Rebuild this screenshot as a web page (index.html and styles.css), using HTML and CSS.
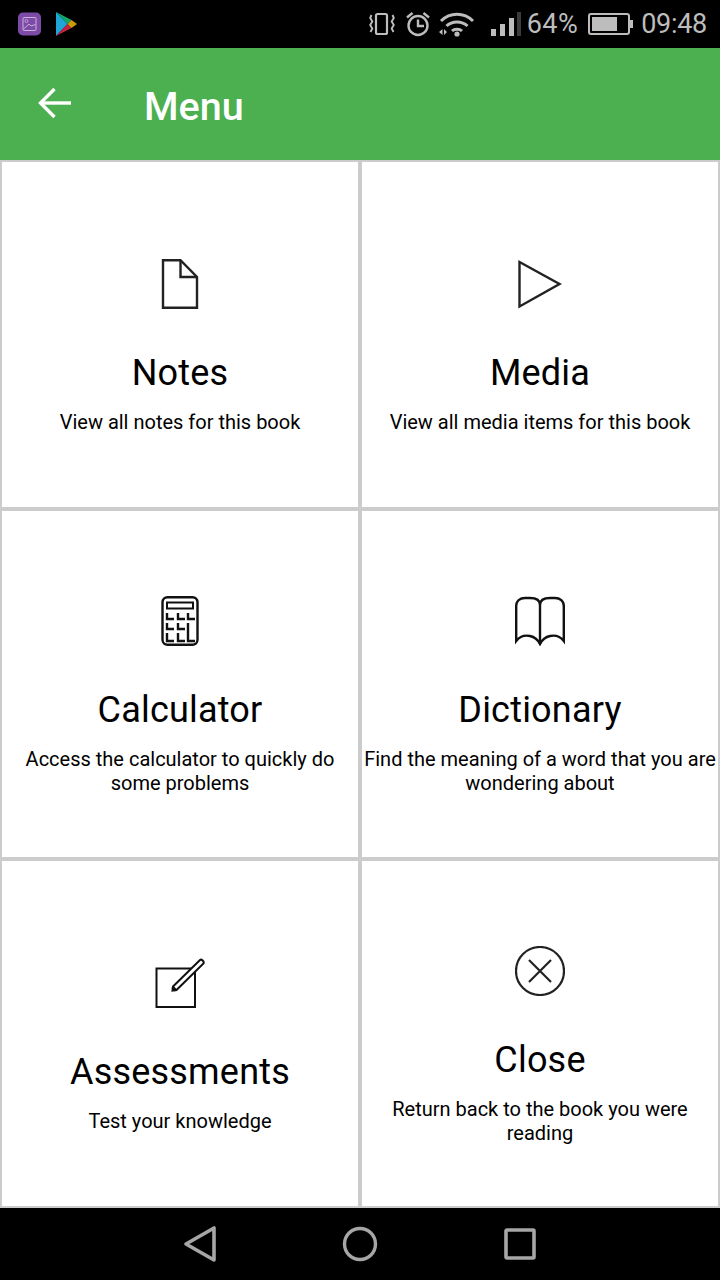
FILE: index.html
```html
<!DOCTYPE html>
<html lang="en">
<head>
    <meta charset="UTF-8">
    <title>Menu</title>
    <link rel="stylesheet" href="styles.css">
</head>
<body>
    <div class="status-bar">
        <div class="status-left">
            <svg class="app-gallery" width="23" height="24" viewBox="0 0 23 24">
                <rect x="0" y="0.5" width="23" height="23" rx="5" fill="#7e4aa8"/>
                <rect x="5" y="5.5" width="13" height="13" rx="1" fill="none" stroke="#c9b3d8" stroke-width="1"/>
                <circle cx="8.5" cy="9" r="1.5" fill="none" stroke="#c9b3d8" stroke-width="0.8"/>
                <path d="M5.5 17 L11 12 L13 14 L17.5 12.5" fill="none" stroke="#c9b3d8" stroke-width="1"/>
            </svg>
            <svg class="app-play" width="22" height="24" viewBox="0 0 22 24">
                <path d="M0 0 L0 24 L11.5 12 Z" fill="#1fa6d6"/>
                <path d="M0 0 L11.5 12 L15.5 8 Z" fill="#12a86b"/>
                <path d="M0 24 L11.5 12 L15.5 16 Z" fill="#c4233f"/>
                <path d="M15.5 8 L21 12 L15.5 16 L11.5 12 Z" fill="#d09a08"/>
            </svg>
        </div>
        <div class="status-right">
            <svg class="st-vibrate" width="26" height="24" viewBox="0 0 26 24" fill="none" stroke="#bdbdbd" stroke-width="2.2">
                <rect x="7" y="2" width="11" height="20" rx="1.5"/>
                <path d="M2.5 3 L1.2 6 L3.3 9.5 L1.2 13 L3.3 16.5 L1.5 20" stroke-width="1.9"/>
                <path d="M23.5 3 L24.8 6 L22.7 9.5 L24.8 13 L22.7 16.5 L24.5 20" stroke-width="1.9"/>
            </svg>
            <svg class="st-alarm" width="26" height="26" viewBox="0 0 26 26" fill="none" stroke="#bdbdbd" stroke-width="2.4">
                <circle cx="13" cy="14.5" r="9.5"/>
                <path d="M13 8.5 V15 H19"/>
                <path d="M2 6.5 L7.5 2 M24 6.5 L18.5 2"/>
            </svg>
            <svg class="st-wifi" width="36" height="26" viewBox="0 0 36 26" fill="none" stroke="#bdbdbd" stroke-width="3">
                <path d="M2 10 C11 1 25 1 34 10"/>
                <path d="M7.5 15 C13 9.5 23 9.5 28.5 15"/>
                <path d="M13 20 C15.5 17.5 20.5 17.5 23 20"/>
                <circle cx="18" cy="23" r="2.6" fill="#bdbdbd" stroke="none"/>
                <path d="M0 21 L3.5 18 V24 Z M5 18 L8 21 L5 24 Z" fill="#bdbdbd" stroke="none"/>
            </svg>
            <svg class="st-signal" width="30" height="25" viewBox="0 0 30 25">
                <rect x="0" y="17" width="5" height="7" fill="#bdbdbd"/>
                <rect x="9" y="12" width="5" height="12" fill="#bdbdbd"/>
                <rect x="18" y="6" width="5" height="18" fill="#bdbdbd"/>
                <rect x="26" y="0" width="4" height="24" fill="#3c3c3c"/>
            </svg>
            <span class="st-text st-pct">64%</span>
            <svg class="st-battery" width="45" height="22" viewBox="0 0 45 22">
                <rect x="1" y="1" width="40" height="20" rx="2" fill="none" stroke="#bdbdbd" stroke-width="2"/>
                <rect x="4" y="4" width="25" height="14" fill="#bdbdbd"/>
                <rect x="42" y="7" width="3" height="8" fill="#bdbdbd"/>
            </svg>
            <span class="st-text st-time">09:48</span>
        </div>
    </div>

    <div class="app-bar">
        <svg class="back-icon" width="34" height="32" viewBox="0 0 34 32" fill="none" stroke="#fff" stroke-width="3.4">
            <path d="M33 16 H3"/>
            <path d="M16.5 2 L2.5 16 L16.5 30"/>
        </svg>
        <h1 class="app-title">Menu</h1>
    </div>

    <div class="menu-grid">
        <div class="menu-item">
            <svg class="menu-icon" viewBox="0 0 50 50" fill="none" stroke="#222" stroke-width="2.4">
                <path d="M8 1.2 H25.5 L42 18 V48.8 H8 Z"/>
                <path d="M25.5 1.2 V18 H42"/>
            </svg>
            <h2>Notes</h2>
            <p>View all notes for this book</p>
        </div>
        <div class="menu-item">
            <svg class="menu-icon" viewBox="0 0 50 50" fill="none" stroke="#222" stroke-width="2.4">
                <path d="M4.5 3 V47.5 L44.5 25 Z"/>
            </svg>
            <h2>Media</h2>
            <p>View all media items for this book</p>
        </div>
        <div class="menu-item">
            <svg class="menu-icon" viewBox="0 0 50 50" fill="none" stroke="#111" stroke-width="2.4">
                <rect x="7.5" y="1.2" width="35" height="47.6" rx="5"/>
                <rect x="12" y="6.5" width="26" height="6" stroke-width="2"/>
                <path d="M12 17 V23 H19 M23 17 V23 H30 M33 17 V23 H40"/>
                <path d="M12 27 V33 H19 M23 27 V33 H30"/>
                <path d="M12 37 V45 H19 M23 37 V45 H30 M33 27 V45 H40"/>
            </svg>
            <h2>Calculator</h2>
            <p>Access the calculator to quickly do some problems</p>
        </div>
        <div class="menu-item">
            <svg class="menu-icon" viewBox="0 0 50 50" fill="none" stroke="#111" stroke-width="2.4">
                <path d="M25 9 C25 4 21 2 15 2 H10 C5 2 1.2 5 1.2 10 V45 C5 40 10 39 15 40 C20 41 23 44 25 48 C27 44 30 41 35 40 C40 39 45 40 48.8 45 V10 C48.8 5 45 2 40 2 H35 C29 2 25 4 25 9 Z"/>
                <path d="M25 9 V48"/>
            </svg>
            <h2>Dictionary</h2>
            <p>Find the meaning of a word that you are wondering about</p>
        </div>
        <div class="menu-item">
            <svg class="menu-icon" viewBox="0 0 50 50" fill="none" stroke="#111" stroke-width="2">
                <rect x="1.5" y="10.5" width="38.5" height="38.5"/>
                <path d="M18 28.5 L45 2 C46.5 0.8 49.5 3.5 48.5 5.5 L21.5 32 L17.5 32.5 Z" fill="#fff"/>
                <path d="M17.5 29 L21 32.5" stroke-width="3"/>
            </svg>
            <h2>Assessments</h2>
            <p>Test your knowledge</p>
        </div>
        <div class="menu-item">
            <svg class="menu-icon" viewBox="0 0 50 50" fill="none" stroke="#222" stroke-width="2.2">
                <circle cx="25" cy="25" r="24"/>
                <path d="M14 14 L36 36 M36 14 L14 36"/>
            </svg>
            <h2>Close</h2>
            <p>Return back to the book you were reading</p>
        </div>
    </div>

    <div class="nav-bar">
        <svg width="36" height="38" viewBox="0 0 36 38" fill="none" stroke="#a6a6a6" stroke-width="3.6" stroke-linejoin="round">
            <path d="M32 3 V35 L4 19 Z"/>
        </svg>
        <svg width="36" height="36" viewBox="0 0 36 36" fill="none" stroke="#a6a6a6" stroke-width="3.4">
            <circle cx="18" cy="18" r="15.5"/>
        </svg>
        <svg width="36" height="36" viewBox="0 0 36 36" fill="none" stroke="#a6a6a6" stroke-width="3.6" stroke-linejoin="round">
            <rect x="4" y="4" width="28" height="28" rx="1"/>
        </svg>
    </div>
</body>
</html>
```

FILE: styles.css
```css
body {
    margin: 0;
    width: 720px;
    height: 1280px;
    display: flex;
    flex-direction: column;
    font-family: Roboto, "Liberation Sans", sans-serif;
    background-color: white;
    overflow: hidden;
}
.status-bar {
    height: 48px;
    flex: none;
    background-color: black;
    display: flex;
    justify-content: space-between;
    align-items: center;
    padding: 0 13px 0 18px;
}
.status-left {
    display: flex;
    align-items: center;
    gap: 15px;
}
.status-right {
    display: flex;
    align-items: center;
}
.st-text {
    color: #bdbdbd;
    font-size: 27px;
}
.st-alarm {
    margin-left: 10px;
}
.st-wifi {
    margin-left: 8px;
}
.st-signal {
    margin-left: 16px;
}
.st-pct {
    margin-left: 6px;
    letter-spacing: 0.5px;
}
.st-battery {
    margin-left: 10px;
}
.st-time {
    margin-left: 8px;
    letter-spacing: -0.3px;
}
.app-bar {
    height: 112px;
    flex: none;
    background-color: #4caf50;
    display: flex;
    align-items: center;
    padding-left: 38px;
}
.back-icon {
    margin-top: -2px;
}
.app-title {
    margin: 5px 0 0 72px;
    color: white;
    font-size: 39.5px;
    font-weight: 500;
}
.menu-grid {
    flex: 1;
    display: grid;
    grid-template-columns: 1fr 1fr;
    grid-template-rows: 1fr 1fr 1fr;
}
.menu-item {
    box-sizing: border-box;
    border: 2px solid #cccccc;
    display: flex;
    flex-direction: column;
    align-items: center;
    justify-content: center;
    padding-top: 24px;
    text-align: center;
    color: black;
}
.menu-icon {
    width: 50px;
    height: 50px;
    flex: none;
}
.menu-item h2 {
    margin: 43px 0 16px;
    font-size: 36px;
    font-weight: 400;
    line-height: 42px;
    letter-spacing: 0.2px;
}
.menu-item p {
    margin: 0;
    font-size: 20px;
    line-height: 24px;
}
.nav-bar {
    height: 72px;
    flex: none;
    background-color: black;
    display: flex;
    justify-content: center;
    align-items: center;
    gap: 124px;
}
```
